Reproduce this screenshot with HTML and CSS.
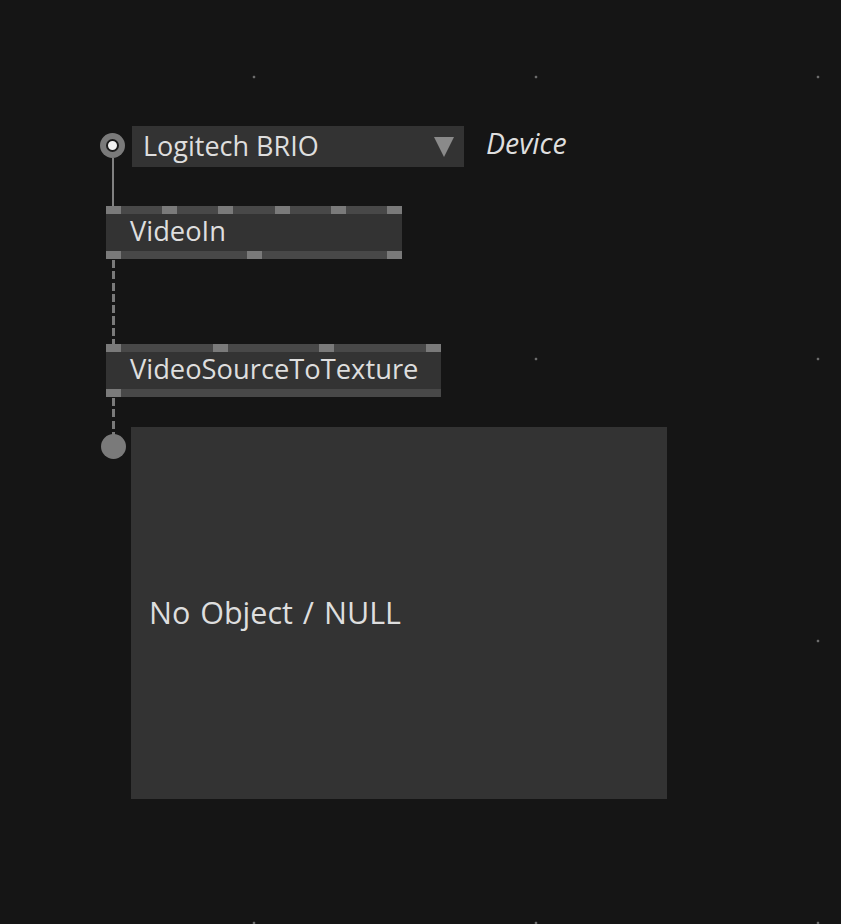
FILE: index.html
```html
<!DOCTYPE html>
<html lang="en">
<head>
    <meta charset="UTF-8">
    <title>Patch - VideoIn</title>
    <link rel="stylesheet" href="styles.css">
</head>
<body>
    <div class="patch">
        <!-- device enum iobox -->
        <div class="iobox">
            <span class="io-pin"><span class="io-pin-dot"></span></span>
            <div class="enum-box">
                <span class="enum-value">Logitech BRIO</span>
                <span class="enum-arrow"></span>
            </div>
            <span class="io-label">Device</span>
        </div>

        <div class="wire wire-device"></div>

        <div class="node node-videoin">
            <div class="pins">
                <span class="pin"></span><span class="pin"></span><span class="pin"></span>
                <span class="pin"></span><span class="pin"></span><span class="pin"></span>
            </div>
            <div class="node-body">VideoIn</div>
            <div class="pins">
                <span class="pin"></span><span class="pin"></span><span class="pin"></span>
            </div>
        </div>

        <div class="wire dashed wire-source"></div>

        <div class="node node-totexture">
            <div class="pins">
                <span class="pin"></span><span class="pin"></span>
                <span class="pin"></span><span class="pin"></span>
            </div>
            <div class="node-body">VideoSourceToTexture</div>
            <div class="pins">
                <span class="pin"></span>
            </div>
        </div>

        <div class="wire dashed wire-texture"></div>
        <span class="out-pin"></span>

        <div class="preview">No Object / NULL</div>
    </div>
</body>
</html>
```

FILE: styles.css
```css
body {
    margin: 0;
    padding: 0;
    background: #151515;
    font-family: "Open Sans", "Noto Sans", sans-serif;
    color: #dedede;
}
.patch {
    position: relative;
    width: 841px;
    height: 924px;
    overflow: hidden;
    background-color: #151515;
    background-image: radial-gradient(circle, #707070 0, #6a6a6a 1.1px, transparent 1.7px);
    background-size: 282px 282px;
    background-position: 113px 218px;
}

/* iobox */
.iobox {
    position: absolute;
    left: 100px;
    top: 126px;
    display: flex;
    align-items: flex-start;
}
.io-pin {
    width: 25px;
    height: 25px;
    margin-top: 7px;
    border-radius: 50%;
    background: #7a7a7a;
    display: flex;
    align-items: center;
    justify-content: center;
}
.io-pin-dot {
    width: 9px;
    height: 9px;
    border-radius: 50%;
    background: #f4f4f4;
    border: 2px solid #1c1c1c;
}
.enum-box {
    width: 321px;
    height: 41px;
    margin-left: 7px;
    padding-left: 11px;
    background: #333;
    display: flex;
    align-items: center;
    justify-content: space-between;
}
.enum-value {
    font-size: 27px;
    line-height: 1;
    margin-top: -2px;
}
.enum-arrow {
    width: 0;
    height: 0;
    margin-right: 10px;
    border-left: 10px solid transparent;
    border-right: 10px solid transparent;
    border-top: 20px solid #8a8a8a;
}
.io-label {
    margin-left: 22px;
    font-size: 28.5px;
    font-style: italic;
    line-height: 34px;
}

/* wires */
.wire {
    position: absolute;
    left: 112px;
    width: 2px;
    background: #808080;
}
.wire.dashed {
    width: 3px;
    background: repeating-linear-gradient(to bottom, #7a7a7a 0, #7a7a7a 8px, transparent 8px, transparent 11.3px);
}
.wire-device {
    top: 158px;
    height: 48px;
}
.wire-source {
    top: 260px;
    height: 84px;
}
.wire-texture {
    top: 398px;
    height: 37px;
}
.out-pin {
    position: absolute;
    left: 101px;
    top: 434px;
    width: 25px;
    height: 25px;
    border-radius: 50%;
    background: #7a7a7a;
}

/* nodes */
.node {
    position: absolute;
    left: 106px;
}
.node-videoin {
    top: 206px;
    width: 296px;
}
.node-totexture {
    top: 344px;
    width: 335px;
}
.pins {
    display: flex;
    justify-content: space-between;
    height: 8px;
    background: #484848;
}
.pin {
    width: 15px;
    background: #7a7a7a;
}
.node-body {
    height: 37px;
    padding-left: 24px;
    padding-bottom: 4px;
    box-sizing: border-box;
    background: #333;
    display: flex;
    align-items: center;
    font-size: 27.3px;
    line-height: 1;
}

/* preview */
.preview {
    position: absolute;
    left: 131px;
    top: 427px;
    width: 536px;
    height: 372px;
    padding-left: 18px;
    padding-bottom: 2px;
    box-sizing: border-box;
    background: #333;
    display: flex;
    align-items: center;
    font-size: 30.5px;
    word-spacing: 2px;
    line-height: 1;
}
```
